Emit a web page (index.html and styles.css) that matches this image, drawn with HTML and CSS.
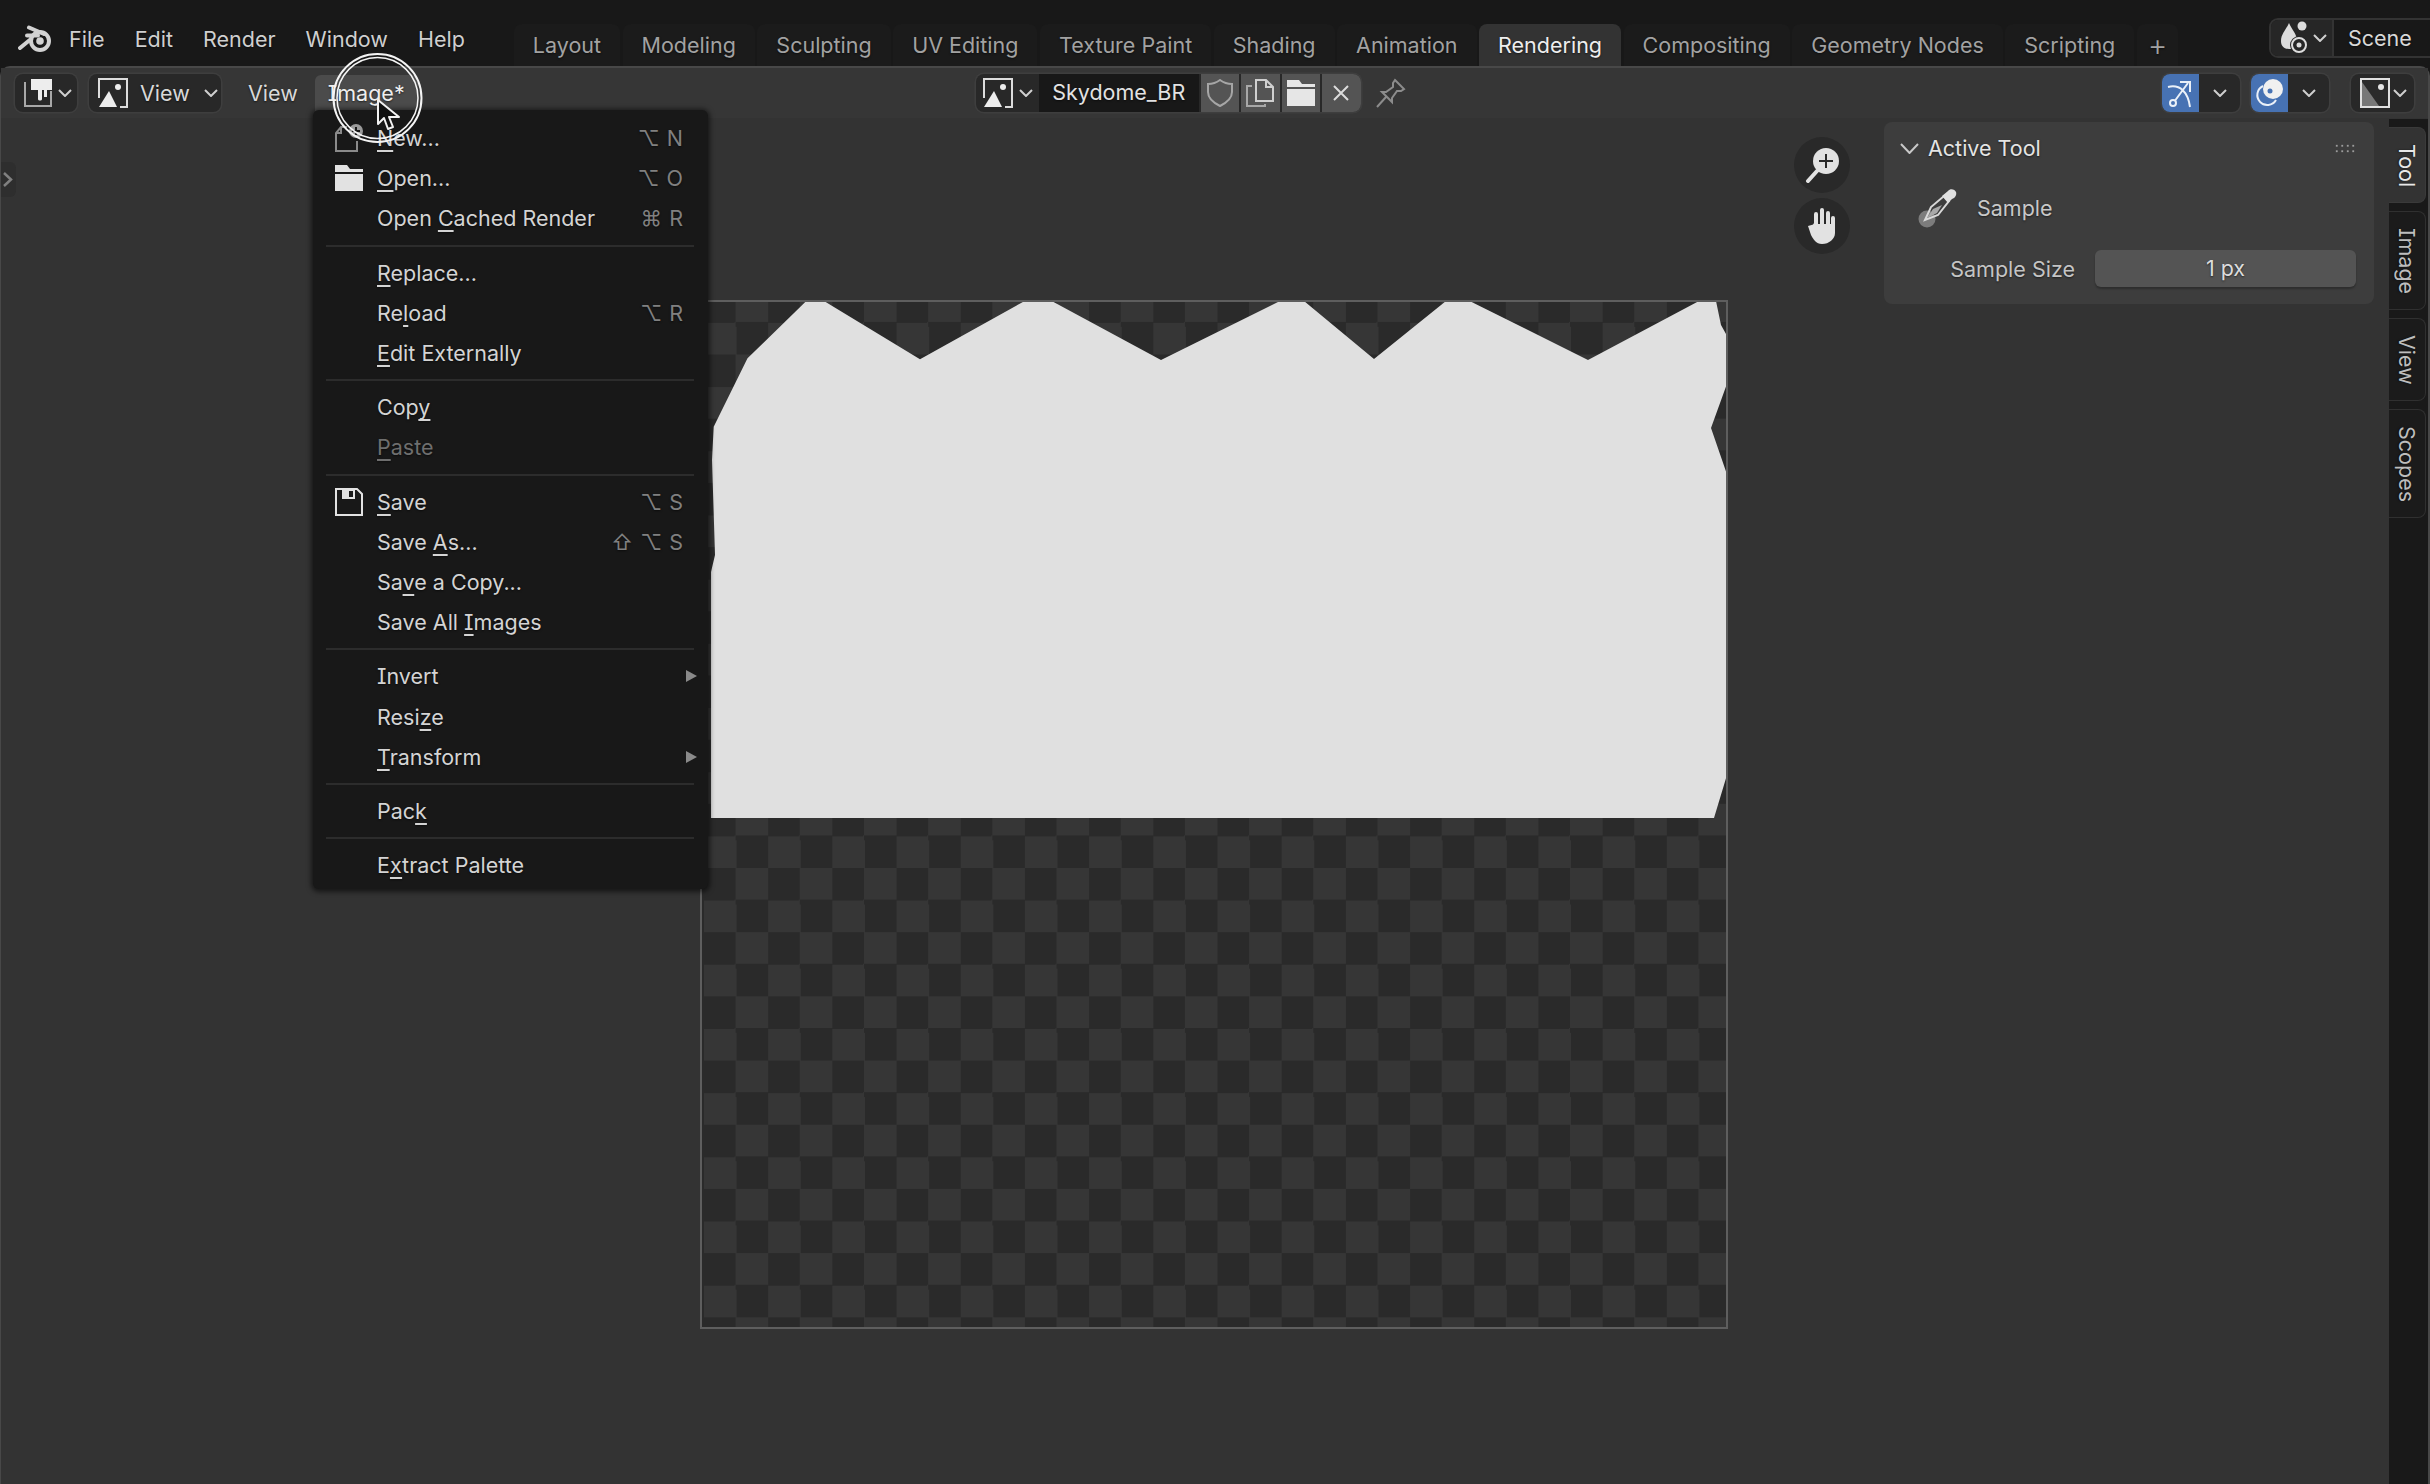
FILE: index.html
```html
<!DOCTYPE html>
<html lang="en">
<head>
    <meta charset="UTF-8">
    <title>Blender - Image Editor</title>
    <link rel="stylesheet" href="styles.css">
</head>
<body>
    <!-- top bar -->
    <div class="topbar">
        <svg class="logo" width="34" height="28" viewBox="0 0 34 28"><path d="M2 23 13 14M9 10.500H20M11 2.500 26 9" class="logo-line"/><circle cx="22" cy="16" r="9" class="logo-ring"/><circle cx="22" cy="16" r="3.800" fill="#d2d2d2"/></svg>
        <div class="menus">
            <span>File</span><span>Edit</span><span>Render</span><span>Window</span><span>Help</span>
        </div>
        <div class="tabs">
            <span class="tab">Layout</span>
            <span class="tab">Modeling</span>
            <span class="tab">Sculpting</span>
            <span class="tab">UV Editing</span>
            <span class="tab">Texture Paint</span>
            <span class="tab">Shading</span>
            <span class="tab">Animation</span>
            <span class="tab active">Rendering</span>
            <span class="tab">Compositing</span>
            <span class="tab">Geometry Nodes</span>
            <span class="tab">Scripting</span>
            <span class="tab tab-add">+</span>
        </div>
        <div class="scene">
            <div class="scene-icon">
                <svg width="30" height="34" viewBox="2 3 30 34"><path d="M11 5 C14 12 19 16 19 23 C19 29 15 31 11 31 C6 31 3 28 3 23 C3 16 8 12 11 5Z" fill="#dcdcdc"/><circle cx="24" cy="8" r="4.500" fill="#dcdcdc"/><circle cx="21" cy="27" r="9" fill="#262626"/><circle cx="21" cy="27" r="7" fill="none" stroke="#dcdcdc" stroke-width="2"/><circle cx="21" cy="27" r="2.500" fill="#dcdcdc"/></svg>
                <svg class="chev" width="14" height="8" viewBox="0 0 14 8"><path d="M1 1 7 7 13 1"/></svg>
            </div>
            <div class="scene-name">Scene</div>
        </div>
    </div>

    <div class="editor">
        <!-- header of the image editor -->
        <div class="header">
            <div class="group g-type">
                <svg width="28" height="28" viewBox="0 0 28 28"><path d="M1 3V27H27V12" fill="none" stroke="#a8a8a8" stroke-width="2"/><path d="M7 0H28V11H23V18H20V11H18V20C18 22 14 22 14 20V11H7Z" fill="#ededed"/></svg>
                <svg class="chev" width="14" height="8" viewBox="0 0 14 8"><path d="M1 1 7 7 13 1"/></svg>
            </div>
            <div class="group g-mode">
                <svg class="img-icon" width="30" height="30" viewBox="0 0 30 30"><path d="M1 20V1H29V29H22" fill="none" stroke="#dcdcdc" stroke-width="2"/><path d="M1 29 11 13 19 29Z" fill="#ededed"/><circle cx="20" cy="9" r="3" fill="#ededed"/></svg>
                <span>View</span>
                <svg class="chev" width="14" height="8" viewBox="0 0 14 8"><path d="M1 1 7 7 13 1"/></svg>
            </div>
            <span class="head-menu">View</span>
            <span class="head-menu hover"><span>Image*</span></span>

            <div class="group g-data">
                <div class="data-type">
                    <svg width="30" height="30" viewBox="0 0 30 30"><path d="M1 20V1H29V29H22" fill="none" stroke="#dcdcdc" stroke-width="2"/><path d="M1 29 11 13 19 29Z" fill="#ededed"/><circle cx="20" cy="9" r="3" fill="#ededed"/></svg>
                    <svg class="chev" width="14" height="8" viewBox="0 0 14 8"><path d="M1 1 7 7 13 1"/></svg>
                </div>
                <div class="data-name">Skydome_BR</div>
                <div class="data-btn"><svg width="28" height="28" viewBox="0 0 28 28"><path d="M14 1 C18 4 22 5 26 5 V13 C26 20 20 24 14 27 C8 24 2 20 2 13 V5 C6 5 10 4 14 1Z" fill="none" stroke="#a6a6a6" stroke-width="2"/></svg></div>
                <div class="data-btn"><svg width="30" height="28" viewBox="0 0 30 28"><path d="M11 22V1H21L28 8V22Z" fill="none" stroke="#cfcfcf" stroke-width="2"/><path d="M21 1V8H28" fill="none" stroke="#cfcfcf" stroke-width="2"/><path d="M7 7H2V27H20V25" fill="none" stroke="#a8a8a8" stroke-width="2"/></svg></div>
                <div class="data-btn"><svg width="30" height="28" viewBox="0 0 30 28"><path d="M1 1H13L16 5H29V8H1Z M1 10H29V27H1Z" fill="#e6e6e6"/></svg></div>
                <div class="data-btn"><svg width="18" height="18" viewBox="0 0 18 18"><path d="M2 2 16 16M16 2 2 16" stroke="#dcdcdc" stroke-width="2" fill="none"/></svg></div>
            </div>
            <svg class="pin" width="30" height="30" viewBox="0 0 30 30"><path d="M19 2 28 11 25 13 21 13 16 20 16 24 6 14 10 14 17 9 17 5ZM10 19 1 29" fill="none" stroke="#8c8c8c" stroke-width="2"/></svg>

            <div class="group g-toggle g-snap">
                <div class="blue"><svg width="30" height="30" viewBox="0 0 30 30"><path d="M2 9C14 6 22 14 24 29M8 24 22 5M14 4H24V14" fill="none" stroke="#eaf0f8" stroke-width="2"/><circle cx="7" cy="25" r="3" fill="#4772b3" stroke="#eaf0f8" stroke-width="2"/></svg></div>
                <div class="drop"><svg class="chev" width="14" height="8" viewBox="0 0 14 8"><path d="M1 1 7 7 13 1"/></svg></div>
            </div>
            <div class="group g-toggle g-over">
                <div class="blue"><svg width="30" height="30" viewBox="0 0 30 30"><circle cx="18" cy="11" r="10" fill="#f0f0f0"/><circle cx="15" cy="13" r="2.500" fill="#4772b3"/><path d="M8 8A10 10 0 1 0 21 22" fill="none" stroke="#eaf0f8" stroke-width="2"/></svg></div>
                <div class="drop"><svg class="chev" width="14" height="8" viewBox="0 0 14 8"><path d="M1 1 7 7 13 1"/></svg></div>
            </div>
            <div class="group g-disp">
                <svg width="30" height="30" viewBox="0 0 30 30"><rect x="1" y="1" width="28" height="28" fill="#2a2a2a" stroke="#e0e0e0" stroke-width="2"/><path d="M2 28V4L19 28Z" fill="#777"/><circle cx="21" cy="9" r="3" fill="#e6e6e6"/></svg>
                <svg class="chev" width="14" height="8" viewBox="0 0 14 8"><path d="M1 1 7 7 13 1"/></svg>
            </div>
        </div>

        <div class="main">
            <div class="canvas">
                <div class="region-toggle"><svg width="10" height="15" viewBox="0 0 10 15"><path d="M1 1 8 7.500 1 14" fill="none" stroke="#808080" stroke-width="2.500"/></svg></div>

                <div class="picture">
                    <div class="checker">
                        <svg class="shape" width="1022" height="1025" viewBox="704 302 1022 1025"><polygon fill="#e0e0e0" points="713.700,426.700 747.500,358.300 806.300,301 824,301 920,359.300 1024.700,301 1051.700,301 1161,360 1280,301 1304,301 1374,359 1446,301 1469.600,301 1588,360 1699,301 1716,301 1721,325 1726.500,335 1726.500,385 1711,428 1726.500,473 1727,775 1714,818 711,818 711,572 715,555 712,460"/></svg>
                    </div>
                </div>

                <div class="gizmo gizmo-zoom">
                    <svg width="34" height="36" viewBox="0 0 34 36"><circle cx="21" cy="14" r="13" fill="#e2e2e2"/><path d="M12 24 3 34" stroke="#e2e2e2" stroke-width="4" stroke-linecap="round"/><path d="M21 7V21M14 14H28" stroke="#2a2a2a" stroke-width="2"/></svg>
                </div>
                <div class="gizmo gizmo-hand">
                    <svg width="34" height="38" viewBox="0 0 34 38"><path d="M10 26V18M11 21V7M17 21V3M23 21V6M28 23V11" stroke="#e2e2e2" stroke-width="4" stroke-linecap="round" fill="none"/><path d="M3 19 L10 17H30V26C30 32 24 37 17 37C11 37 8 32 6 28Z" fill="#e2e2e2"/></svg>
                </div>

                <div class="panel">
                    <div class="panel-head">
                        <svg width="19" height="11" viewBox="0 0 19 11"><path d="M1 1 9.500 10 18 1" fill="none" stroke="#c8c8c8" stroke-width="2"/></svg>
                        <span>Active Tool</span>
                        <span class="grip"></span>
                    </div>
                    <div class="tool-row">
                        <svg width="42" height="40" viewBox="0 0 42 40"><circle cx="10" cy="31" r="8.500" fill="#7c7c7c"/><path d="M8 32 14 19 27 8 32 13 21 27Z" fill="none" stroke="#d8d8d8" stroke-width="2"/><path d="M10 30 16 21 25 17 20 25Z" fill="#a8a8a8"/><path d="M25 8 31 3C33 0 38 1 39 4 40 7 38 10 35 11L31 15Z" fill="#e0e0e0"/></svg>
                        <span>Sample</span>
                    </div>
                    <div class="prop-row">
                        <span class="prop-label">Sample Size</span>
                        <span class="prop-field">1 px</span>
                    </div>
                </div>
            </div>

            <div class="strip">
                <span class="vtab active">Tool</span>
                <span class="vtab">Image</span>
                <span class="vtab">View</span>
                <span class="vtab">Scopes</span>
            </div>
        </div>
    </div>

    <!-- open menu -->
    <div class="menu">
        <div class="item">
            <span class="ic"><svg width="28" height="28" viewBox="0 0 28 28"><path d="M12 3H6L1 9V27H22V17M1 9H6V3" fill="none" stroke="#8a8a8a" stroke-width="2"/><circle cx="21" cy="7" r="7" fill="#9a9a9a"/><path d="M21 3V11M17 7H25" stroke="#181818" stroke-width="2"/></svg></span>
            <span class="label"><u>N</u>ew...</span><span class="keys">⌥ N</span>
        </div>
        <div class="item">
            <span class="ic"><svg width="28" height="28" viewBox="0 0 28 28"><path d="M0 1H12L15 5H28V8H0Z M0 10H28V27H0Z" fill="#e2e2e2"/></svg></span>
            <span class="label"><u>O</u>pen...</span><span class="keys">⌥ O</span>
        </div>
        <div class="item">
            <span class="ic"></span>
            <span class="label">Open <u>C</u>ached Render</span><span class="keys">⌘ R</span>
        </div>
        <div class="sep"></div>
        <div class="item">
            <span class="ic"></span>
            <span class="label"><u>R</u>eplace...</span>
        </div>
        <div class="item">
            <span class="ic"></span>
            <span class="label">Re<u>l</u>oad</span><span class="keys">⌥ R</span>
        </div>
        <div class="item">
            <span class="ic"></span>
            <span class="label"><u>E</u>dit Externally</span>
        </div>
        <div class="sep"></div>
        <div class="item">
            <span class="ic"></span>
            <span class="label">Cop<u>y</u></span>
        </div>
        <div class="item off">
            <span class="ic"></span>
            <span class="label"><u>P</u>aste</span>
        </div>
        <div class="sep"></div>
        <div class="item">
            <span class="ic"><svg width="28" height="28" viewBox="0 0 28 28"><path d="M1 1H22L27 6V27H1Z" fill="none" stroke="#e2e2e2" stroke-width="2"/><path d="M7 1H20V11H7Z" fill="#e2e2e2"/><path d="M14 3H18V9H14Z" fill="#181818"/></svg></span>
            <span class="label"><u>S</u>ave</span><span class="keys">⌥ S</span>
        </div>
        <div class="item">
            <span class="ic"></span>
            <span class="label">Save <u>A</u>s...</span><span class="keys">⇧ ⌥ S</span>
        </div>
        <div class="item">
            <span class="ic"></span>
            <span class="label">Sa<u>v</u>e a Copy...</span>
        </div>
        <div class="item">
            <span class="ic"></span>
            <span class="label">Save All <u>I</u>mages</span>
        </div>
        <div class="sep"></div>
        <div class="item">
            <span class="ic"></span>
            <span class="label">Invert</span><span class="arrow"></span>
        </div>
        <div class="item">
            <span class="ic"></span>
            <span class="label">Resi<u>z</u>e</span>
        </div>
        <div class="item">
            <span class="ic"></span>
            <span class="label"><u>T</u>ransform</span><span class="arrow"></span>
        </div>
        <div class="sep"></div>
        <div class="item">
            <span class="ic"></span>
            <span class="label">Pac<u>k</u></span>
        </div>
        <div class="sep"></div>
        <div class="item">
            <span class="ic"></span>
            <span class="label">E<u>x</u>tract Palette</span>
        </div>
    </div>

    <!-- recording highlight round the mouse -->
    <svg class="pointer" width="100" height="100" viewBox="0 0 100 100">
        <circle cx="47.500" cy="48" r="44" fill="none" stroke="#f4f4f4" stroke-width="2"/>
        <circle cx="47.500" cy="48" r="40.500" fill="none" stroke="#f4f4f4" stroke-width="1.500"/>
        <path d="M48 50V74L54 68 58 79 63 77 59 67H69Z" fill="#111" stroke="#f2f2f2" stroke-width="2" stroke-linejoin="round"/>
    </svg>
</body>
</html>
```
FILE: styles.css
```css
*{
    box-sizing: border-box;
}
html,body{
    margin: 0;
    height: 100%;
}
body{
    background-color: #181818;
    color: #d8d8d8;
    font-family: "Inter", "DejaVu Sans", sans-serif;
    font-size: 21.500px;
    font-feature-settings: "cv08";
    overflow: hidden;
    display: flex;
    flex-direction: column;
    position: relative;
    text-shadow: 0 1px 2px rgba(0,0,0,.55);
}
svg{
    display: block;
    flex: none;
}
.chev path{
    fill: none;
    stroke: #cfcfcf;
    stroke-width: 2;
}

/* top bar */
.topbar{
    height: 66px;
    flex: none;
    display: flex;
    align-items: center;
    padding: 12px 0 0 18px;
    overflow: hidden;
}
.logo-line{
    fill: none;
    stroke: #d2d2d2;
    stroke-width: 4;
    stroke-linecap: round;
}
.logo-ring{
    fill: none;
    stroke: #d2d2d2;
    stroke-width: 4;
}
.menus{
    display: flex;
    gap: 30px;
    margin-left: 17px;
    color: #cfcfcf;
}
.tabs{
    display: flex;
    align-self: flex-end;
    gap: 2.500px;
    margin-left: 49px;
}
.tab{
    height: 42px;
    line-height: 42px;
    padding: 0 19px;
    color: #a2a2a2;
    background-color: #1b1b1b;
    border-radius: 8px 8px 0 0;
}
.tab.active{
    background-color: #333;
    color: #eee;
}
.tab-add{
    padding: 0 11px;
    font-size: 30px;
    font-weight: 300;
}
.scene{
    margin-left: auto;
    margin-right: -20px;
    margin-top: -2px;
    width: 181px;
    height: 40px;
    flex: none;
    display: flex;
    border: 2px solid #333;
    border-radius: 9px;
    background-color: #181818;
}
.scene-icon{
    width: 63px;
    flex: none;
    display: flex;
    align-items: center;
    gap: 3px;
    padding-left: 9px;
    background-color: #262626;
    border-right: 2px solid #333;
    border-radius: 7px 0 0 7px;
}
.scene-name{
    padding-left: 14px;
    line-height: 36px;
    color: #d8d8d8;
}

/* editor */
.editor{
    flex: 1;
    min-height: 0;
    display: flex;
    flex-direction: column;
    background-color: #333;
    border: 2px solid #484848;
    border-left-width: 1px;
    border-bottom: 0;
    border-radius: 10px 10px 0 0;
}
.header{
    height: 50px;
    flex: none;
    display: flex;
    align-items: center;
    padding: 0 14px;
    background-color: #363636;
}
.group{
    height: 38px;
    display: flex;
    align-items: center;
    background-color: #282828;
    border-radius: 8px;
    box-shadow: 0 0 0 1.500px #3e3e3e;
}
.g-type{
    width: 62px;
    padding-left: 9px;
    gap: 6px;
}
.g-mode{
    width: 132px;
    margin-left: 12px;
    padding-left: 9px;
    gap: 12px;
}
.g-mode .chev{
    margin-left: 2px;
}
.head-menu{
    height: 36px;
    line-height: 36px;
    padding: 0 13px;
    margin-left: 4px;
}
.g-mode + .head-menu{
    margin-left: 14px;
}
.head-menu.hover{
    background-color: #4b4b4b;
    border-radius: 6px 6px 0 0;
    color: #eee;
}
.g-data{
    margin-left: 558px;
    width: 385px;
    gap: 2px;
}
.data-type{
    width: 61px;
    height: 100%;
    display: flex;
    align-items: center;
    gap: 6px;
    padding-left: 7px;
}
.data-name{
    width: 160px;
    height: 100%;
    line-height: 36px;
    text-align: center;
    background-color: #181818;
    color: #e2e2e2;
}
.data-btn{
    width: 38.500px;
    height: 100%;
    display: flex;
    align-items: center;
    justify-content: center;
    background-color: #545454;
}
.data-btn:last-child{
    border-radius: 0 8px 8px 0;
}
.pin{
    margin-left: 15px;
}
.g-toggle{
    width: 78px;
}
.g-snap{
    margin-left: auto;
}
.g-over{
    margin-left: 11px;
}
.blue{
    width: 37px;
    height: 100%;
    display: flex;
    align-items: center;
    justify-content: center;
    background-color: #4772b3;
    border-radius: 8px 0 0 8px;
}
.drop{
    flex: 1;
    display: flex;
    justify-content: center;
}
.g-disp{
    width: 63px;
    margin-left: 22px;
    padding-left: 9px;
    gap: 3px;
}

/* main area */
.main{
    flex: 1;
    min-height: 0;
    display: flex;
}
.canvas{
    flex: 1;
    position: relative;
}
.region-toggle{
    position: absolute;
    left: 0;
    top: 44px;
    width: 15px;
    height: 35px;
    display: flex;
    align-items: center;
    padding-left: 2px;
    background-color: #2e2e2e;
    border-radius: 0 6px 6px 0;
}
/* image on the free canvas */
.picture{
    position: absolute;
    left: 699px;
    top: 182px;
    width: 1028px;
    height: 1029px;
    border: 2px solid #5e5e5e;
    padding-left: 2px;
    background-color: #2a2a2a;
}
.checker{
    height: 100%;
    position: relative;
    overflow: hidden;
    background-image: conic-gradient(#363636 25%, #2a2a2a 0 50%, #363636 0 75%, #2a2a2a 0);
    background-size: 64.200px 64.200px;
    background-position: 0 -11.700px;
}
.shape{
    position: absolute;
    left: 0;
    top: 0;
}
.gizmo{
    position: absolute;
    left: 1793px;
    width: 56px;
    height: 56px;
    border-radius: 50%;
    background-color: #292929;
    display: flex;
    align-items: center;
    justify-content: center;
}
.gizmo-zoom{
    top: 19px;
}
.gizmo-hand{
    top: 80px;
}
.panel{
    position: absolute;
    top: 4px;
    left: 1883px;
    width: 490px;
    height: 182px;
    padding: 0 18px 0 16px;
    background-color: #3d3d3d;
    border-radius: 8px;
}
.panel-head{
    height: 52px;
    display: flex;
    align-items: center;
    gap: 9px;
    color: #e4e4e4;
}
.grip{
    margin-left: auto;
    width: 22px;
    height: 10px;
    background-image: radial-gradient(#9c9c9c 1.100px, transparent 1.300px);
    background-size: 5.500px 5.500px;
}
.tool-row{
    height: 68px;
    display: flex;
    align-items: center;
    gap: 18px;
    margin-left: 17px;
    color: #c8c8c8;
}
.prop-row{
    display: flex;
    align-items: center;
    justify-content: flex-end;
    gap: 20px;
    margin-top: 8px;
    color: #c4c4c4;
}
.prop-field{
    width: 261px;
    height: 37px;
    line-height: 37px;
    text-align: center;
    background-color: #545454;
    border-radius: 6px;
    color: #dcdcdc;
    box-shadow: 0 2px 2px rgba(0,0,0,.25);
}
.strip{
    width: 39px;
    flex: none;
    margin-top: 1px;
    padding-top: 8px;
    display: flex;
    flex-direction: column;
    gap: 8px;
    background-color: #191919;
}
.vtab{
    writing-mode: vertical-rl;
    width: 37px;
    padding: 15.500px 0;
    text-align: center;
    line-height: 37px;
    color: #bdbdbd;
    background-color: #1b1b1b;
    border: 1.500px solid #303030;
    border-left: 0;
    border-radius: 0 8px 8px 0;
}
.vtab.active{
    background-color: #333;
    border-color: #3a3a3a;
    color: #e8e8e8;
}

/* menu */
.menu{
    position: absolute;
    left: 313px;
    top: 110px;
    width: 395px;
    padding: 8px 25px 4px 22px;
    background-color: #181818;
    border-radius: 6px;
    box-shadow: 0 1px 5px 2px rgba(0,0,0,.55);
    color: #d4d4d4;
}
.item{
    height: 40.200px;
    display: flex;
    align-items: center;
}
.ic{
    width: 28px;
    height: 28px;
    margin-right: 14px;
    flex: none;
}
.label u{
    text-decoration-thickness: 2px;
    text-underline-offset: 4px;
}
.keys{
    margin-left: auto;
    color: #808080;
    word-spacing: 1px;
}
.arrow{
    margin-left: auto;
    margin-right: -14px;
    border-style: solid;
    border-width: 6px 0 6px 11px;
    border-color: transparent transparent transparent #8a8a8a;
}
.off{
    color: #6e6e6e;
}
.sep{
    height: 2px;
    margin: 6px -11px 6px -9px;
    background-color: #2c2c2c;
}
.pointer{
    position: absolute;
    left: 330px;
    top: 50px;
}
```
